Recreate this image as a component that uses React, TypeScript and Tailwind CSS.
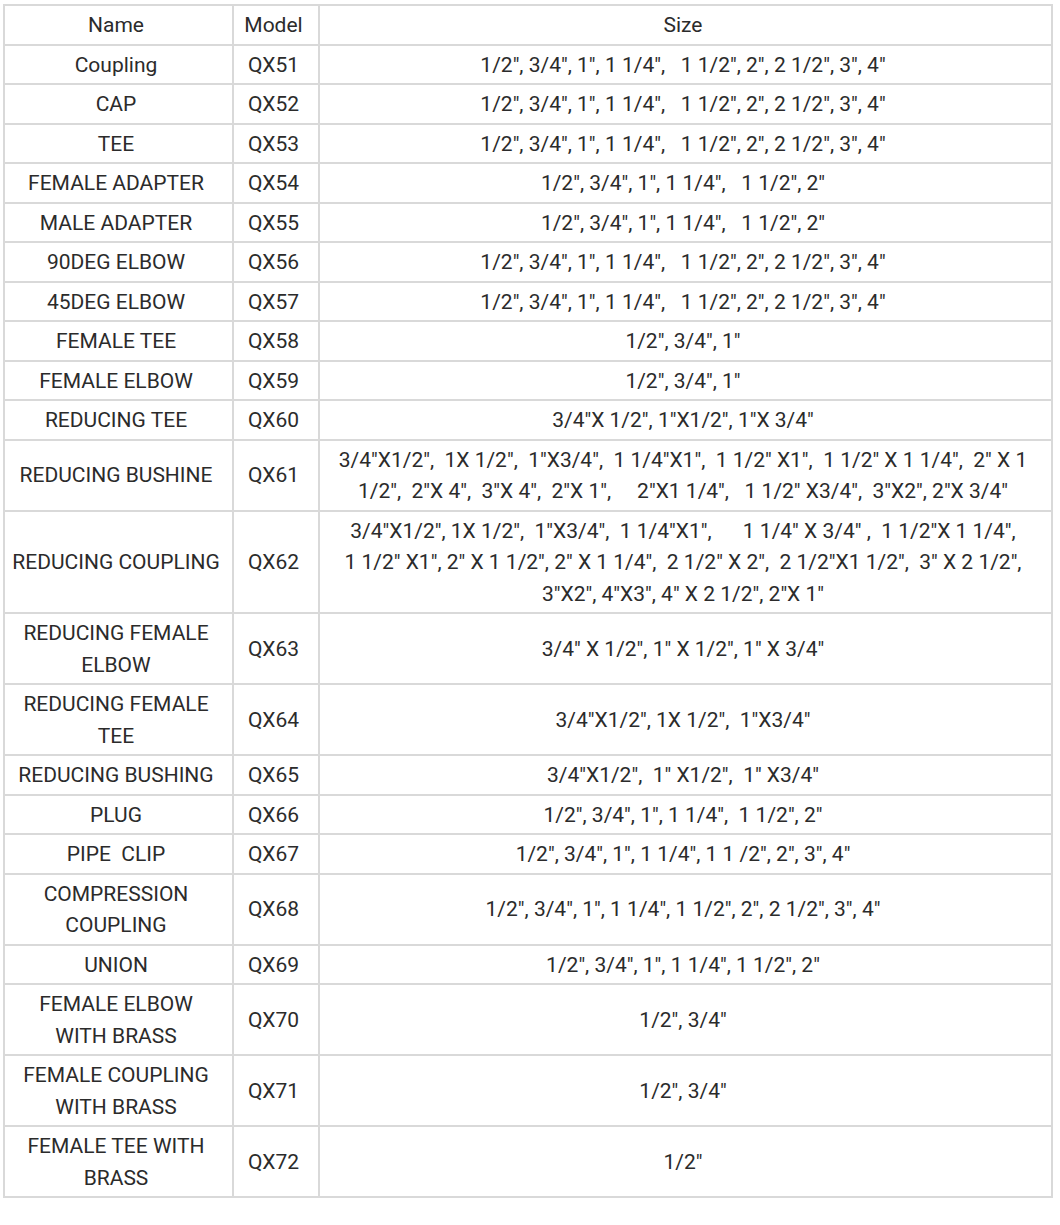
import React from "react";

type Row = {
  name: string[];
  model: string;
  size: string[];
};

const rows: Row[] = [
  { name: ["Coupling"], model: "QX51", size: ['1/2", 3/4", 1", 1 1/4",   1 1/2", 2", 2 1/2", 3", 4"'] },
  { name: ["CAP"], model: "QX52", size: ['1/2", 3/4", 1", 1 1/4",   1 1/2", 2", 2 1/2", 3", 4"'] },
  { name: ["TEE"], model: "QX53", size: ['1/2", 3/4", 1", 1 1/4",   1 1/2", 2", 2 1/2", 3", 4"'] },
  { name: ["FEMALE ADAPTER"], model: "QX54", size: ['1/2", 3/4", 1", 1 1/4",   1 1/2", 2"'] },
  { name: ["MALE ADAPTER"], model: "QX55", size: ['1/2", 3/4", 1", 1 1/4",   1 1/2", 2"'] },
  { name: ["90DEG ELBOW"], model: "QX56", size: ['1/2", 3/4", 1", 1 1/4",   1 1/2", 2", 2 1/2", 3", 4"'] },
  { name: ["45DEG ELBOW"], model: "QX57", size: ['1/2", 3/4", 1", 1 1/4",   1 1/2", 2", 2 1/2", 3", 4"'] },
  { name: ["FEMALE TEE"], model: "QX58", size: ['1/2", 3/4", 1"'] },
  { name: ["FEMALE ELBOW"], model: "QX59", size: ['1/2", 3/4", 1"'] },
  { name: ["REDUCING TEE"], model: "QX60", size: ['3/4"X 1/2", 1"X1/2", 1"X 3/4"'] },
  {
    name: ["REDUCING BUSHINE"],
    model: "QX61",
    size: [
      '3/4"X1/2",  1X 1/2",  1"X3/4",  1 1/4"X1",  1 1/2" X1",  1 1/2" X 1 1/4",  2" X 1',
      '1/2",  2"X 4",  3"X 4",  2"X 1",     2"X1 1/4",   1 1/2" X3/4",  3"X2", 2"X 3/4"',
    ],
  },
  {
    name: ["REDUCING COUPLING"],
    model: "QX62",
    size: [
      '3/4"X1/2", 1X 1/2",  1"X3/4",  1 1/4"X1",      1 1/4" X 3/4" ,  1 1/2"X 1 1/4",',
      '1 1/2" X1", 2" X 1 1/2", 2" X 1 1/4",  2 1/2" X 2",  2 1/2"X1 1/2",  3" X 2 1/2",',
      '3"X2", 4"X3", 4" X 2 1/2", 2"X 1"',
    ],
  },
  { name: ["REDUCING FEMALE", "ELBOW"], model: "QX63", size: ['3/4" X 1/2", 1" X 1/2", 1" X 3/4"'] },
  { name: ["REDUCING FEMALE", "TEE"], model: "QX64", size: ['3/4"X1/2", 1X 1/2",  1"X3/4"'] },
  { name: ["REDUCING BUSHING"], model: "QX65", size: ['3/4"X1/2",  1" X1/2",  1" X3/4"'] },
  { name: ["PLUG"], model: "QX66", size: ['1/2", 3/4", 1", 1 1/4",  1 1/2", 2"'] },
  { name: ["PIPE  CLIP"], model: "QX67", size: ['1/2", 3/4", 1", 1 1/4", 1 1 /2", 2", 3", 4"'] },
  { name: ["COMPRESSION", "COUPLING"], model: "QX68", size: ['1/2", 3/4", 1", 1 1/4", 1 1/2", 2", 2 1/2", 3", 4"'] },
  { name: ["UNION"], model: "QX69", size: ['1/2", 3/4", 1", 1 1/4", 1 1/2", 2"'] },
  { name: ["FEMALE ELBOW", "WITH BRASS"], model: "QX70", size: ['1/2", 3/4"'] },
  { name: ["FEMALE COUPLING", "WITH BRASS"], model: "QX71", size: ['1/2", 3/4"'] },
  { name: ["FEMALE TEE WITH", "BRASS"], model: "QX72", size: ['1/2"'] },
];

const cell = "border-2 border-[#d9d9d9] pl-[1px] pr-[6px] pt-[4px] pb-[2px] text-center align-middle whitespace-pre";

const Lines = ({ lines }: { lines: string[] }) => (
  <>
    {lines.map((l, i) => (
      <div key={i}>{l}</div>
    ))}
  </>
);

export default function App() {
  return (
    <div className="min-h-[1225px] bg-white pt-[4px] pl-[3px]" style={{ fontFamily: "Roboto, 'Noto Sans', sans-serif" }}>
      <table className="border-collapse text-[21px] leading-[31.5px] text-[#2b2b2b]" style={{ width: 1050 }}>
        <colgroup>
          <col className="w-[229px]" />
          <col className="w-[86px]" />
          <col />
        </colgroup>
        <thead>
          <tr>
            <td className={cell}>Name</td>
            <td className={cell}>Model</td>
            <td className={cell}>Size</td>
          </tr>
        </thead>
        <tbody>
          {rows.map((r) => (
            <tr key={r.model}>
              <td className={cell}>
                <Lines lines={r.name} />
              </td>
              <td className={cell}>{r.model}</td>
              <td className={cell}>
                <Lines lines={r.size} />
              </td>
            </tr>
          ))}
        </tbody>
      </table>
    </div>
  );
}
